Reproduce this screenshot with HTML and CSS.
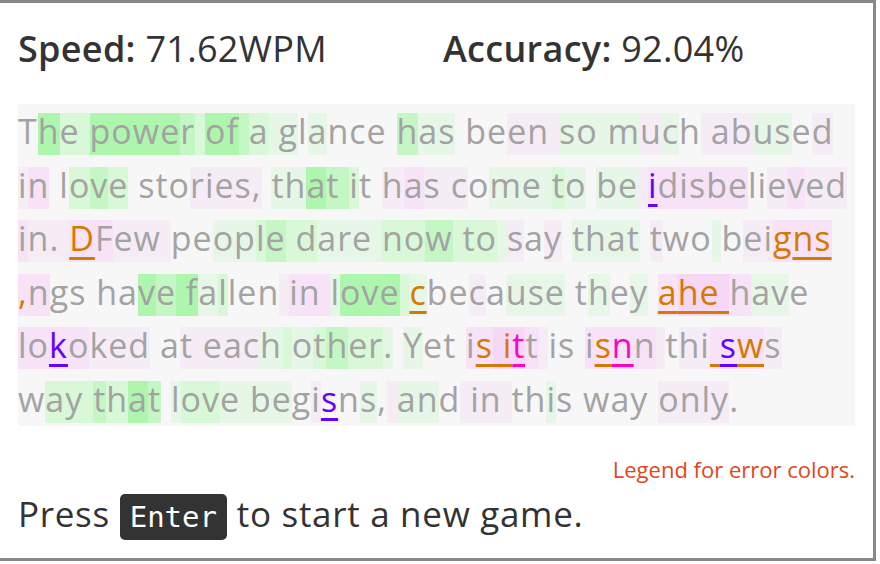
FILE: index.html
```html
<!DOCTYPE html>
<html>
<head>
<meta charset="utf-8">
<link rel="stylesheet" href="styles.css">
</head>
<body>
<div class="frame">
  <div class="stats">
    <div class="stat"><b>Speed:</b> 71.62WPM</div>
    <div class="stat"><b>Accuracy:</b> 92.04%</div>
  </div>
  <div class="passage">
    <div class="line">T<span class="a">h</span><span class="c">e </span><span class="a">powe</span><span class="b">r</span><span class="c"> </span><span class="a">of</span><span class="b"> </span><span class="c">a</span><span class="d"> g</span>l<span class="d">a</span>nce <span class="b">h</span><span class="d">as</span> be<span class="p">en </span><span class="d">so m</span><span class="p">u</span><span class="d">c</span>h<span class="p"> ab</span><span class="d">us</span>e<span class="p">d</span></div>
    <div class="line"><span class="p">i</span><span class="q">n</span> l<span class="c">o</span><span class="b">v</span><span class="c">e</span> sto<span class="p">ries,</span> <span class="d">th</span><span class="a">a</span><span class="b">t </span><span class="c">i</span>t <span class="p">h</span><span class="q">a</span><span class="p">s c</span>o<span class="d">me </span><span class="c">t</span><span class="d">o</span> <span class="d">be</span><span class="p"> </span><span class="q u purple">i</span><span class="q">disbe</span>li<span class="p">e</span><span class="q">v</span><span class="p">ed</span></div>
    <div class="line"><span class="q">i</span><span class="p">n. </span><span class="q"><span class="u orange">D</span>F</span><span class="p">ew </span>pe<span class="d">op</span><span class="c">l</span><span class="b">e</span><span class="c"> d</span><span class="d">are </span><span class="c">no</span><span class="b">w</span><span class="c"> to</span><span class="d"> </span><span class="p">s</span>a<span class="p">y</span> <span class="d">that</span> <span class="p">t</span>wo<span class="d"> </span>b<span class="p">ei</span><span class="q orange">g</span><span class="q u orange">ns</span></div>
    <div class="line"><span class="q orange">,</span><span class="q">n</span>gs ha<span class="a">v</span><span class="b">e</span><span class="a"> f</span><span class="d">a</span><span class="c">l</span>len<span class="p"> </span><span class="q">in </span><span class="d">l</span><span class="a">ove</span><span class="c"> </span><span class="d u orange">c</span>be<span class="p">c</span>a<span class="d">use</span> t<span class="d">h</span>e<span class="d">y</span> <span class="q u orange">a</span><span class="r u orange">he </span><span class="q">h</span><span class="d">av</span>e</div>
    <div class="line"><span class="q">lo</span><span class="q u purple">k</span><span class="q">o</span><span class="p">ked</span> a<span class="p">t eac</span><span class="d">h</span><span class="c"> </span><span class="d">o</span><span class="c">t</span><span class="b">h</span><span class="c">er</span><span class="d">.</span> <span class="d">Y</span>et <span class="q">i</span><span class="q u orange">s</span><span class="r u orange"> i</span><span class="r u magenta">t</span><span class="q">t</span><span class="p"> </span>is <span class="q">i</span><span class="q u orange">s</span><span class="q u magenta">n</span><span class="q">n</span><span class="p"> </span>t<span class="p">hi</span><span class="q u orange"> </span><span class="q u purple">s</span><span class="q u orange">w</span><span class="p">s</span></div>
    <div class="line">w<span class="c">ay </span><span class="b">t</span><span class="c">h</span><span class="a">a</span><span class="b">t</span> <span class="d">l</span><span class="c">ov</span><span class="d">e be</span>g<span class="p">i</span><span class="u purple">s</span>n<span class="d">s</span>,<span class="p"> </span><span class="d">an</span>d<span class="p"> in </span>th<span class="d">i</span>s way <span class="p">only</span>.</div>
  </div>
  <div class="legend">Legend for error colors.</div>
  <div class="press">Press <kbd class="key">Enter</kbd> to start a new game.</div>
</div>
</body>
</html>
```
FILE: styles.css
```css
html, body {
  margin: 0;
  padding: 0;
  background: #ffffff;
}

body {
  font-family: "Open Sans", "Noto Sans", sans-serif;
  color: #333333;
}

.frame {
  width: 837px;
  height: 555px;
  padding: 0 18px;
  border: 3px solid #888888;
  border-left: none;
}

.stats {
  display: grid;
  grid-template-columns: 425px 1fr;
  margin-top: 21px;
  font-size: 36px;
  letter-spacing: 0.3px;
  line-height: 49px;
  white-space: nowrap;
}

.stat b {
  font-weight: 600;
}

.passage {
  margin-top: 31px;
  background: #f7f7f7;
  color: #a3a3a3;
  font-size: 34px;
  letter-spacing: 1px;
}

.line {
  white-space: pre;
  line-height: 49.6px;
  padding-top: 3px;
  padding-bottom: 1px;
}

.a, .b, .c, .d, .p, .q, .r {
  display: inline-block;
  line-height: 37.7px;
  padding-bottom: 4.3px;
}

.a { background: #aef6ae; }
.b { background: #c5f7c5; }
.c { background: #d8f8d8; }
.d { background: #e7f7e7; }
.p { background: #f6ecf6; }
.q { background: #f7e2f7; }
.r { background: #f6d7f6; }

.orange { color: #d47a00; }
.purple { color: #6600ff; }
.magenta { color: #ff00c8; }

.u {
  text-decoration: underline;
  text-decoration-thickness: 3px;
  text-underline-offset: 6px;
  text-decoration-skip-ink: none;
}

.legend {
  margin-top: 30px;
  text-align: right;
  font-size: 22px;
  line-height: 26px;
  color: #e2461c;
}

.press {
  margin-top: 9px;
  font-size: 35px;
  letter-spacing: 0.7px;
  line-height: 46px;
}

.key {
  display: inline-block;
  background: #333333;
  color: #ffffff;
  font-family: "DejaVu Sans Mono", "Liberation Mono", monospace;
  font-size: 29px;
  letter-spacing: 0;
  line-height: 46px;
  padding: 0 10px;
  border-radius: 5px;
}
```
